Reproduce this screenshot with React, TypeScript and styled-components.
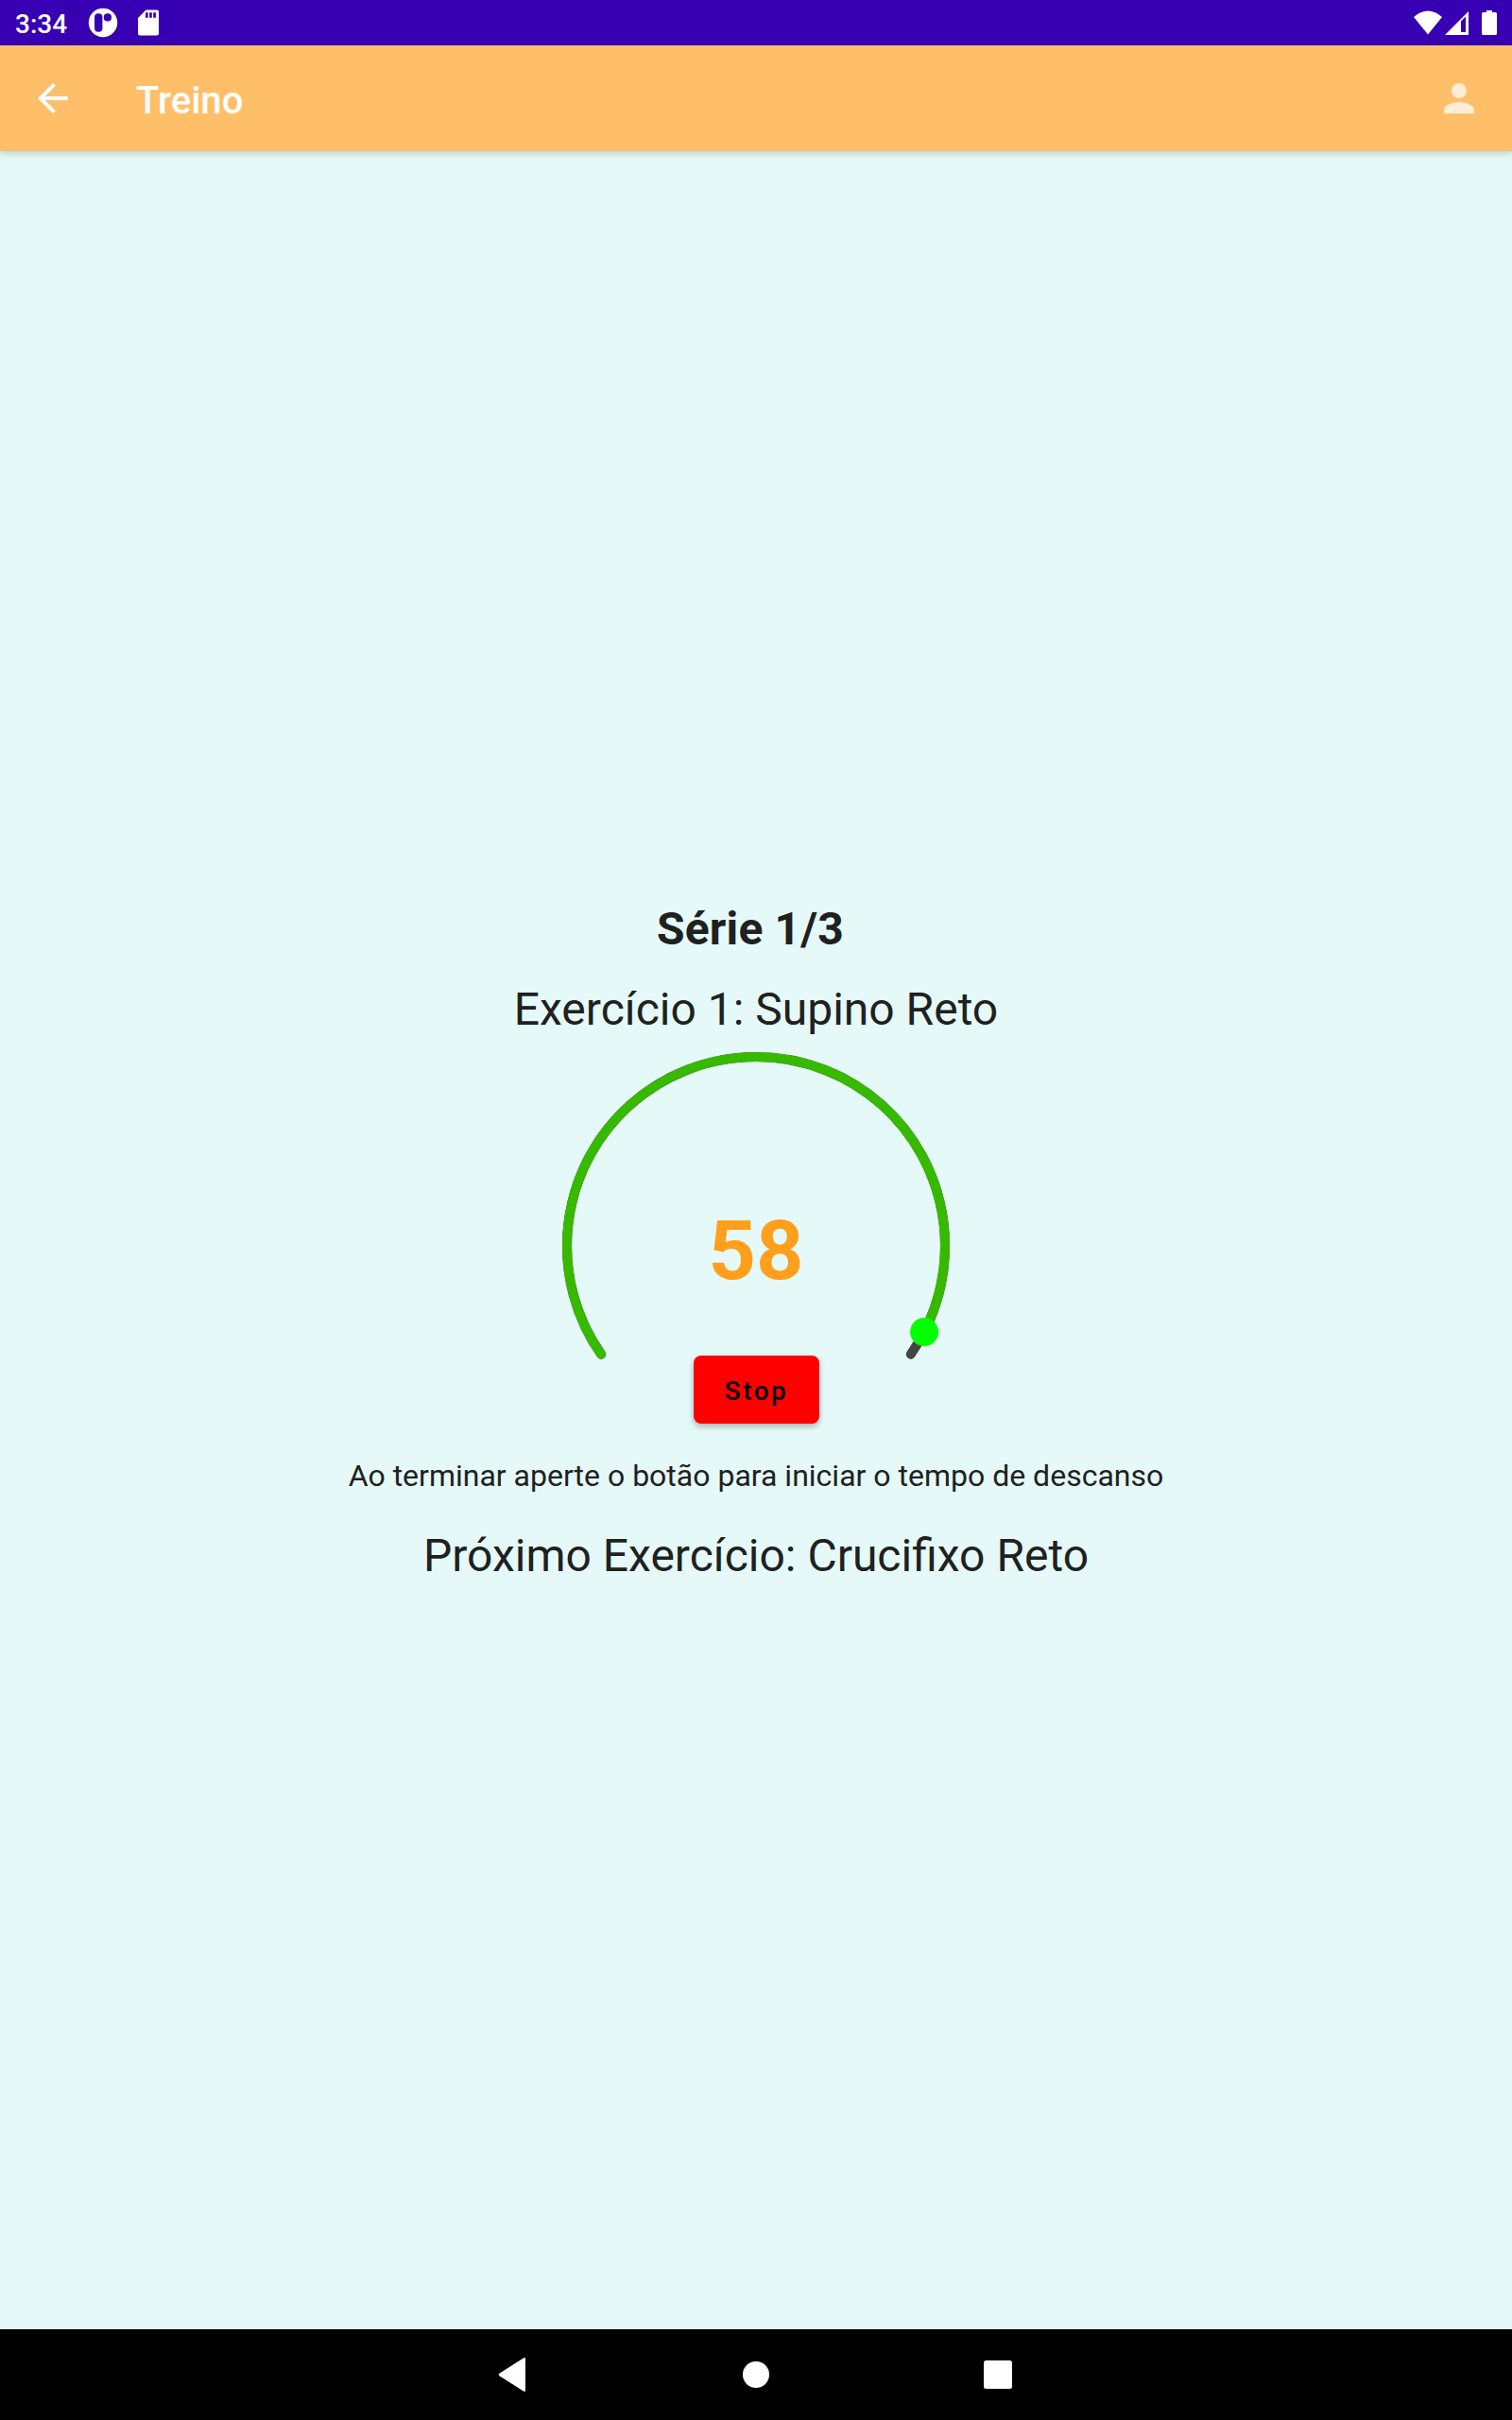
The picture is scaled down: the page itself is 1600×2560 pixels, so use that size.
import React from "react";
import styled, { createGlobalStyle } from "styled-components";

const GlobalStyle = createGlobalStyle`
  body { margin: 0; background: #e4f9f8; }
  * { box-sizing: border-box; }
`;

const Screen = styled.div`
  display: flex;
  flex-direction: column;
  width: 1600px;
  height: 2560px;
  background: #e4f9f8;
  color: #1f2120;
  font-family: Roboto, sans-serif;
`;

const StatusBar = styled.header`
  display: flex;
  align-items: center;
  justify-content: space-between;
  height: 48px;
  padding: 0 16px;
  background: #3700b3;
  color: #fff;
`;

const StatusGroup = styled.div`
  display: flex;
  align-items: center;
  height: 48px;
`;

const Clock = styled.span`
  width: 77px;
  font-size: 28px;
  font-weight: 500;
  line-height: 46px;
  padding-top: 4px;
`;

const Icon = styled.svg<{ $gap?: number }>`
  display: block;
  flex: none;
  margin-left: ${(p) => p.$gap ?? 0}px;
`;

const AppBar = styled.div`
  display: flex;
  align-items: center;
  height: 112px;
  padding: 0 32px;
  background: #ffbf69;
  color: #fff;
  box-shadow: 0 2px 8px rgba(0, 0, 0, 0.18);
`;

const Title = styled.h1`
  flex: 1;
  margin: 0;
  padding: 6px 0 0 64px;
  font-size: 40px;
  font-weight: 500;
  line-height: 48px;
`;

const Content = styled.main`
  flex: 1;
  display: flex;
  flex-direction: column;
  align-items: center;
  justify-content: center;
  padding-top: 4px;
`;

const Line = styled.p<{ $size: number; $bold?: boolean }>`
  margin: 0;
  font-size: ${(p) => p.$size}px;
  line-height: 85px;
  font-weight: ${(p) => (p.$bold ? 700 : 400)};
  letter-spacing: ${(p) => (p.$bold ? "0.15px" : "normal")};
  white-space: pre;
`;

const Hint = styled(Line)`
  height: 85px;
  line-height: 87px;
`;

const Timer = styled.div`
  display: grid;
  place-items: center;
  width: 400px;
  height: 400px;
  margin-top: 8px;
  & > * { grid-area: 1 / 1; }
`;

const Dial = styled.svg`
  overflow: visible;
`;

const Seconds = styled.span`
  padding-top: 9px;
  color: #ff9f1c;
  font-size: 88px;
  font-weight: 700;
  line-height: 104px;
`;

const StopButton = styled.button`
  align-self: end;
  width: 133px;
  height: 72px;
  margin-bottom: 12px;
  padding: 2px 0 0 1px;
  border: 0;
  border-radius: 8px;
  background: #f00;
  color: #000;
  font: 500 28px Roboto, sans-serif;
  letter-spacing: 2.5px;
  box-shadow: 0 3px 6px rgba(0, 0, 0, 0.28);
`;

const NavBar = styled.nav`
  display: flex;
  align-items: center;
  justify-content: center;
  gap: 216px;
  height: 96px;
  background: #000;
`;

const START = 145;
const SWEEP = 250;
const PROGRESS = 0.9683;

const pointAt = (degrees: number) => {
  const a = (degrees * Math.PI) / 180;
  return { x: 200 + 200 * Math.cos(a), y: 200 + 200 * Math.sin(a) };
};

const arc = (sweep: number) => {
  const from = pointAt(START);
  const to = pointAt(START + sweep);
  return `M${from.x} ${from.y}A200 200 0 1 1 ${to.x} ${to.y}`;
};

export default function App() {
  const handle = pointAt(START + SWEEP * PROGRESS);
  return (
    <Screen>
      <GlobalStyle />
      <StatusBar>
        <StatusGroup>
          <Clock>3:34</Clock>
          <Icon width="32" height="32" viewBox="0 0 32 32">
            <circle cx="16" cy="16" r="15.2" fill="#fff" />
            <rect x="7" y="6.2" width="8.4" height="19.6" rx="4" fill="#3700b3" />
            <rect x="16.8" y="6.3" width="8.2" height="8.2" rx="3.8" fill="#3700b3" />
          </Icon>
          <Icon $gap={21} width="22" height="28" viewBox="0 0 22 28" fill="#fff">
            <path
              fillRule="evenodd"
              d="M8.5.5H20q2 0 2 2v23q0 2-2 2H2q-2 0-2-2V9ZM8 3.2v5.500h2.700V3.200Zm4.100 0v5.500h2.700V3.200Zm4.100 0v5.500h2.700V3.200Z"
            />
          </Icon>
        </StatusGroup>
        <StatusGroup>
          <Icon width="30" height="26" viewBox="0 0 30 26" fill="#fff">
            <path d="M0 7Q15-6 30 7L15 25.500Z" />
          </Icon>
          <Icon $gap={3} width="25" height="26" viewBox="0 0 25 26" fill="#fff">
            <path fillRule="evenodd" d="M25 1v25H0ZM17 11.500v11.500h5V6.500Z" />
          </Icon>
          <Icon $gap={14} width="16" height="26" viewBox="0 0 16 26" fill="#fff">
            <path d="M5 0h6v2h3.500q1.500 0 1.500 1.500v21q0 1.500-1.500 1.500h-13q-1.500 0-1.500-1.500v-21q0-1.500 1.500-1.500h3.500Z" />
          </Icon>
        </StatusGroup>
      </StatusBar>
      <AppBar>
        <Icon width="48" height="48" viewBox="0 0 24 24" fill="#fff">
          <path d="M20 11H7.830l5.590-5.590L12 4l-8 8 8 8 1.410-1.410L7.830 13H20v-2z" />
        </Icon>
        <Title>Treino</Title>
        <Icon width="48" height="48" viewBox="0 0 24 24" fill="#fff" fillOpacity="0.72">
          <path d="M12 12c2.210 0 4-1.790 4-4s-1.790-4-4-4-4 1.790-4 4 1.790 4 4 4zm0 2c-2.670 0-8 1.340-8 4v2h16v-2c0-2.660-5.330-4-8-4z" />
        </Icon>
      </AppBar>
      <Content>
        <Line $size={48} $bold>{"Série 1/3 "}</Line>
        <Line $size={48}>Exercício 1: Supino Reto</Line>
        <Timer>
          <Dial width="400" height="400" viewBox="0 0 400 400" fill="none" strokeWidth="10" strokeLinecap="round">
            <path d={arc(SWEEP)} stroke="#444" />
            <path d={arc(SWEEP * PROGRESS)} stroke="#37b900" />
            <circle cx={handle.x} cy={handle.y} r="15" fill="#0f0" />
          </Dial>
          <Seconds>58</Seconds>
          <StopButton>Stop</StopButton>
        </Timer>
        <Hint $size={32}>Ao terminar aperte o botão para iniciar o tempo de descanso</Hint>
        <Line $size={48}>Próximo Exercício: Crucifixo Reto</Line>
      </Content>
      <NavBar>
        <Icon width="40" height="40" viewBox="0 0 40 40" fill="#fff">
          <path d="M4.700 18.600 30 2.400q2-1 2 1v33.200q0 2-2 1L4.700 21.400q-2-1.400 0-2.800Z" />
        </Icon>
        <Icon width="40" height="40" viewBox="0 0 40 40" fill="#fff">
          <circle cx="20" cy="20" r="14" />
        </Icon>
        <Icon width="40" height="40" viewBox="0 0 40 40" fill="#fff">
          <rect x="5" y="5" width="30" height="30" rx="2.5" />
        </Icon>
      </NavBar>
    </Screen>
  );
}
